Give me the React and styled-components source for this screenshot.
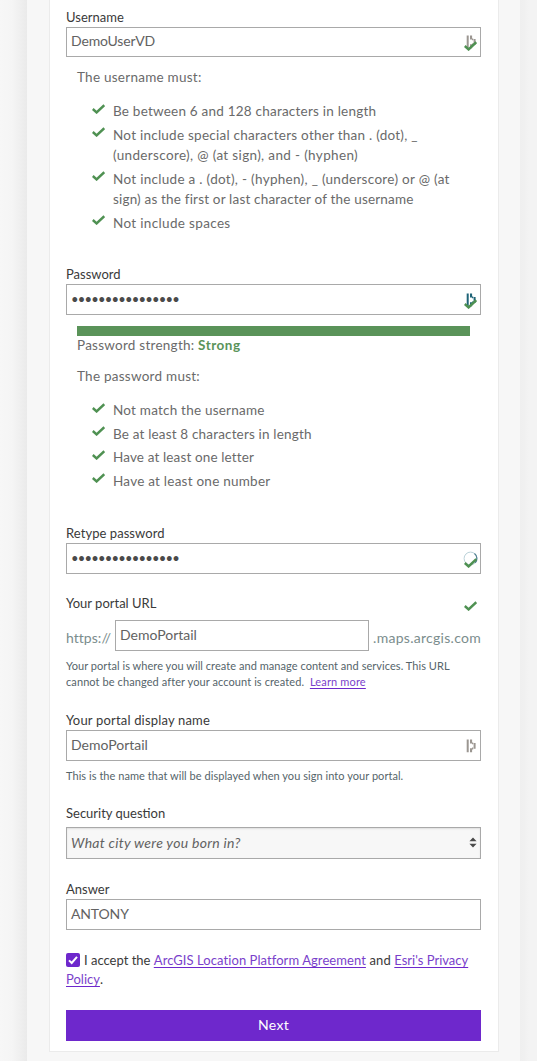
import styled, { createGlobalStyle } from 'styled-components';

const GlobalStyle = createGlobalStyle`
  * {
    box-sizing: border-box;
  }

  body {
    margin: 0;
    background: #f7f7f7;
    font-family: Lato, 'Open Sans', sans-serif;
    color: #3a3a3a;
  }
`;

const Page = styled.div`
  display: grid;
  grid-template-columns: 27px 493px 17px;
  height: 1061px;
  overflow: hidden;
`;

const LeftShade = styled.div`
  background: linear-gradient(to right, #f7f7f7 0, #f5f5f5 12px, #f0f0f0 19px, #eaeaea 27px);
`;

const RightShade = styled.div`
  background: linear-gradient(to right, #efefef 0, #f0f0f0 4px, #f3f3f3 9px, #f3f3f3 17px);
`;

const Main = styled.main`
  padding-left: 22px;
  background: #f7f7f7;
`;

const Card = styled.form`
  width: 450px;
  height: 1052px;
  padding: 9px 17px 0 16px;
  background: #fff;
  border: 1px solid #ebebeb;
  border-top: none;
`;

const Field = styled.div`
  margin-bottom: ${({ $gap }) => $gap}px;
`;

const LabelRow = styled.div`
  display: flex;
  justify-content: space-between;
  align-items: flex-start;
  height: 18px;
`;

const Label = styled.label`
  font-size: 13px;
  line-height: 17px;
  letter-spacing: ${({ $track }) => $track || 0}px;
  white-space: nowrap;
`;

const LabelIcon = styled.span`
  display: flex;
  padding: 6px 4px 0 0;
`;

const InputBox = styled.div`
  display: flex;
  align-items: center;
  position: relative;
  width: ${({ $width }) => ($width ? `${$width}px` : 'auto')};
  height: ${({ $height }) => $height || 31}px;
  padding: 0 5px 2px 4px;
  border: 1px solid #a9a9a9;
  background: #fff;
`;

const Value = styled.span`
  font-size: 14px;
  line-height: 20px;
  letter-spacing: ${({ $track }) => $track || 0}px;
  color: #626262;
  white-space: nowrap;
`;

const Dots = styled(Value)`
  font-size: 13px;
  letter-spacing: -0.79px;
  color: #4a4a4a;
`;

const FieldIcon = styled.span`
  display: flex;
  position: absolute;
  right: ${({ $right }) => $right}px;
  top: ${({ $top }) => $top}px;
`;

const Rules = styled.div`
  padding: 0 11px;
`;

const Hint = styled.p`
  margin: ${({ $top }) => $top || 0}px 0 0;
  font-size: 13.5px;
  line-height: 20px;
  letter-spacing: 0.25px;
  color: #6a6a6a;
`;

const RuleList = styled.ul`
  display: grid;
  gap: 3.2px;
  margin: 14px 0 0;
  padding: 0 0 0 15px;
  list-style: none;
`;

const RuleItem = styled.li`
  display: flex;
  gap: 8px;
`;

const RuleCheck = styled.span`
  display: flex;
  padding-top: 2.6px;
`;

const RuleLine = styled.span`
  display: block;
  font-size: 13.5px;
  line-height: 20.4px;
  letter-spacing: ${({ $track }) => $track}px;
  color: #6a6a6a;
  white-space: nowrap;
`;

const StrengthBar = styled.div`
  height: 10px;
  background: #5a9359;
`;

const Strong = styled.strong`
  font-weight: 700;
  letter-spacing: 0.5px;
  color: #5a9359;
`;

const UrlRow = styled.div`
  display: flex;
  justify-content: space-between;
  margin-top: 7px;
`;

const Affix = styled.span`
  padding-top: 8px;
  font-size: 14px;
  line-height: 20px;
  letter-spacing: ${({ $track }) => $track}px;
  color: #7b8d8d;
`;

const Help = styled.p`
  margin: 7px 0 0;
  font-size: 11px;
  line-height: 16px;
  color: #55646a;
  white-space: nowrap;
`;

const HelpLine = styled.span`
  display: block;
  letter-spacing: ${({ $track }) => $track}px;
`;

const Link = styled.a`
  color: #7a3fcb;
  text-decoration: underline;
  text-decoration-color: #6e28cc;
  text-decoration-thickness: 1px;
  text-decoration-skip-ink: none;
  text-underline-offset: 2px;
  letter-spacing: ${({ $track }) => $track || 0}px;
`;

const SelectBox = styled(InputBox)`
  justify-content: space-between;
  height: 32px;
  margin-top: 4px;
  padding: 0 3px 1px 4px;
  background: #f7f7f7;
  box-shadow: inset 0 1px 2px rgba(0, 0, 0, 0.1);
`;

const Italic = styled(Value)`
  font-style: italic;
`;

const Accept = styled.div`
  font-size: 13px;
  line-height: 18px;
`;

const AcceptLine = styled.div`
  display: flex;
  align-items: flex-start;
  height: 19px;
  white-space: pre;
`;

const Checkbox = styled.span`
  display: flex;
  align-items: center;
  justify-content: center;
  width: 14px;
  height: 14px;
  margin: 2px 4px 0 0;
  border-radius: 2px;
  background: #6e28cc;
`;

const NextButton = styled.button`
  display: block;
  width: 100%;
  height: 31px;
  margin-top: 21px;
  padding: 0 0 2px;
  border: none;
  background: #6e28cc;
  color: #fff;
  font-family: inherit;
  font-size: 14px;
  line-height: 29px;
  letter-spacing: 0.31px;
`;

const Check = () => (
  <svg width="13" height="10" viewBox="0 0 13 10" fill="none">
    <path d="M0.8 5L4.6 8.4L12.3 1.2" stroke="#4f9152" strokeWidth="2.5" />
  </svg>
);

const KeyIcon = ({ color }) => (
  <svg width="10" height="14" viewBox="0 0 10 14" fill={color}>
    <path d="M0.7 0.5h2v12.8h-2zM4 0.5h2.1v4H4zM4 9.3h2.1v4H4zM6 3.4h1.2v1.8H6zM6 8.6h1.2v1.8H6zM7.6 4h2v5.8h-2z" />
  </svg>
);

const Spinner = () => (
  <svg width="15" height="15" viewBox="0 0 15 15" fill="none">
    <circle cx="7.5" cy="7.5" r="6.4" stroke="#bcd3da" />
    <path d="M11.5 2.5A6.4 6.4 0 0 1 12.2 11.8" stroke="#4f7f90" strokeWidth="1.2" />
  </svg>
);

const Arrows = () => (
  <svg width="8" height="11" viewBox="0 0 8 11" fill="#4a4a4a">
    <path d="M4 0.4L7.6 4.3H0.4zM4 10.6L7.6 6.7H0.4z" />
  </svg>
);

const usernameRules = [
  [['Be between 6 and 128 characters in length', 0.22]],
  [
    ['Not include special characters other than . (dot), _', 0.25],
    ['(underscore), @ (at sign), and - (hyphen)', 0.35],
  ],
  [
    ['Not include a . (dot), - (hyphen), _ (underscore) or @ (at', 0.3],
    ['sign) as the first or last character of the username', 0.18],
  ],
  [['Not include spaces', 0.34]],
];

const passwordRules = [
  [['Not match the username', 0.22]],
  [['Be at least 8 characters in length', 0.17]],
  [['Have at least one letter', 0.13]],
  [['Have at least one number', 0.24]],
];

const Checklist = ({ rules }) => (
  <RuleList>
    {rules.map((lines) => (
      <RuleItem key={lines[0][0]}>
        <RuleCheck>
          <Check />
        </RuleCheck>
        <div>
          {lines.map(([text, track]) => (
            <RuleLine key={text} $track={track}>
              {text}
            </RuleLine>
          ))}
        </div>
      </RuleItem>
    ))}
  </RuleList>
);

const password = '•'.repeat(16);

const App = () => (
  <>
    <GlobalStyle />
    <Page>
      <LeftShade />
      <Main>
        <Card>
          <Field $gap={10}>
            <LabelRow>
              <Label>Username</Label>
            </LabelRow>
            <InputBox $height={30}>
              <Value $track={-0.15}>DemoUserVD</Value>
              <FieldIcon $right={4} $top={7}>
                <KeyIcon color="#9b9691" />
              </FieldIcon>
              <FieldIcon $right={3} $top={13}>
                <Check />
              </FieldIcon>
            </InputBox>
          </Field>
          <Field $gap={33}>
            <Rules>
              <Hint>The username must:</Hint>
              <Checklist rules={usernameRules} />
            </Rules>
          </Field>

          <Field $gap={11}>
            <LabelRow>
              <Label>Password</Label>
            </LabelRow>
            <InputBox>
              <Dots>{password}</Dots>
              <FieldIcon $right={4} $top={8}>
                <KeyIcon color="#1f6478" />
              </FieldIcon>
              <FieldIcon $right={3} $top={14}>
                <Check />
              </FieldIcon>
            </InputBox>
          </Field>
          <Field $gap={34}>
            <Rules>
              <StrengthBar />
              <Hint $top={-1}>
                Password strength: <Strong>Strong</Strong>
              </Hint>
              <Hint $top={11}>The password must:</Hint>
              <Checklist rules={passwordRules} />
            </Rules>
          </Field>

          <Field $gap={21}>
            <LabelRow>
              <Label $track={0.06}>Retype password</Label>
            </LabelRow>
            <InputBox>
              <Dots>{password}</Dots>
              <FieldIcon $right={2} $top={7}>
                <Spinner />
              </FieldIcon>
              <FieldIcon $right={3} $top={14}>
                <Check />
              </FieldIcon>
            </InputBox>
          </Field>

          <Field $gap={22}>
            <LabelRow>
              <Label>Your portal URL</Label>
              <LabelIcon>
                <Check />
              </LabelIcon>
            </LabelRow>
            <UrlRow>
              <Affix $track={0.04}>https://</Affix>
              <InputBox $width={254}>
                <Value>DemoPortail</Value>
              </InputBox>
              <Affix $track={0.28}>.maps.arcgis.com</Affix>
            </UrlRow>
            <Help>
              <HelpLine $track={0.05}>
                Your portal is where you will create and manage content and services. This URL
              </HelpLine>
              <HelpLine $track={0.09}>
                cannot be changed after your account is created. &nbsp;
                <Link $track={0.16}>Learn more</Link>
              </HelpLine>
            </Help>
          </Field>

          <Field $gap={21}>
            <LabelRow>
              <Label $track={0.18}>Your portal display name</Label>
            </LabelRow>
            <InputBox>
              <Value>DemoPortail</Value>
              <FieldIcon $right={4} $top={8}>
                <KeyIcon color="#9b9691" />
              </FieldIcon>
            </InputBox>
            <Help>
              <HelpLine $track={0.05}>
                This is the name that will be displayed when you sign into your portal.
              </HelpLine>
            </Help>
          </Field>

          <Field $gap={22}>
            <LabelRow>
              <Label>Security question</Label>
            </LabelRow>
            <SelectBox>
              <Italic $track={0.28}>What city were you born in?</Italic>
              <Arrows />
            </SelectBox>
          </Field>

          <Field $gap={21}>
            <LabelRow>
              <Label>Answer</Label>
            </LabelRow>
            <InputBox>
              <Value $track={-0.15}>ANTONY</Value>
            </InputBox>
          </Field>

          <Accept>
            <AcceptLine>
              <Checkbox>
                <svg width="10" height="10" viewBox="0 0 10 10" fill="none">
                  <path d="M1 5.4L3.7 8L9 1.8" stroke="#fff" strokeWidth="2" />
                </svg>
              </Checkbox>
              I accept the <Link $track={0.07}>ArcGIS Location Platform Agreement</Link>
              <And> and </And>
              <Link>Esri's Privacy</Link>
            </AcceptLine>
            <AcceptLine>
              <Link>Policy</Link>.
            </AcceptLine>
          </Accept>
          <NextButton type="button">Next</NextButton>
        </Card>
      </Main>
      <RightShade />
    </Page>
  </>
);

const And = styled.span`
  letter-spacing: 0.15px;
`;

export default App;
